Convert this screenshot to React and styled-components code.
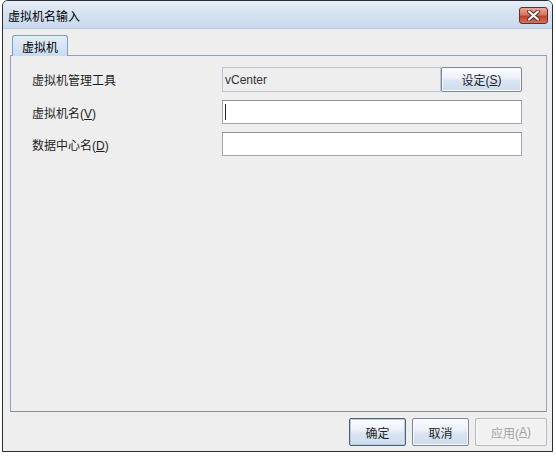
import React from 'react'
import styled, { createGlobalStyle } from 'styled-components'

const GlobalStyle = createGlobalStyle`
  body {
    margin: 0;
    background: #ffffff;
    font-family: "Liberation Sans", "Noto Sans CJK SC", sans-serif;
    font-size: 12px;
    color: #1e1e1e;
  }
`

const Window = styled.div`
  margin-left: 2px;
  width: 551px;
  height: 452px;
  box-sizing: border-box;
  border: 1px solid #2a2d33;
  border-radius: 6px 6px 0 0;
  box-shadow: 0 1px 0 #41b6d9;
  display: flex;
  flex-direction: column;
  overflow: hidden;
  background: #eeeeee;
`
const TitleBar = styled.div`
  height: 27px;
  flex: none;
  display: flex;
  align-items: center;
  justify-content: space-between;
  padding: 0 4px 0 5px;
  background: linear-gradient(#e6eef8, #d3e0f0 55%, #c9d9ee);
  border-bottom: 1px solid #b9c9de;
`
const Title = styled.span`
  font-size: 12px;
  color: #000;
  margin-top: 1px;
`
const CloseButton = styled.div`
  width: 29px;
  height: 17px;
  margin-top: 2px;
  box-sizing: border-box;
  border: 1px solid #6e2a22;
  border-radius: 3px;
  background: linear-gradient(#e9a999, #d77561 45%, #c0412a 55%, #d5735a);
  display: flex;
  align-items: center;
  justify-content: center;
`
const Body = styled.div`
  flex: 1;
  display: flex;
  flex-direction: column;
  padding: 6px 5px 5px 7px;
`
const TabStrip = styled.div`
  display: flex;
  padding-left: 2px;
  margin-bottom: -1px;
  position: relative;
  z-index: 1;
`
const Tab = styled.div`
  width: 56px;
  height: 21px;
  box-sizing: border-box;
  border: 1px solid #7f9ccb;
  border-bottom: none;
  border-radius: 3px 3px 0 0;
  background: linear-gradient(#e4edf9, #c9dbf1);
  display: flex;
  align-items: center;
  justify-content: center;
  color: #000;
`
const Panel = styled.div`
  height: 357px;
  box-sizing: border-box;
  border: 1px solid #8c9fc6;
  border-right-color: #9aa3b3;
  border-bottom-color: #8b8e96;
  padding: 11px 0 0 21px;
  display: grid;
  grid-template-columns: 190px 300px;
  grid-auto-rows: min-content;
  row-gap: 8px;
  align-items: center;
`
const Label = styled.div`
  color: #1e1e1e;
`
const Mn = styled.span`
  text-decoration: underline;
  text-underline-offset: 1px;
`
const FieldRow = styled.div`
  display: flex;
  height: 25px;
`
const Field = styled.div`
  height: ${(p) => (p.$tall ? 25 : 24)}px;
  flex: 1;
  box-sizing: border-box;
  border: 1px solid ${(p) => (p.$readonly ? '#b8c6d6' : '#9ea7b4')};
  border-top-color: ${(p) => (p.$readonly ? '#b8c6d6' : '#8a919c')};
  background: ${(p) => (p.$readonly ? '#eeeeee' : '#ffffff')};
  display: flex;
  align-items: center;
  padding-left: 2px;
  color: #333;
`
const Caret = styled.span`
  width: 1px;
  height: 16px;
  background: #222;
`
const Button = styled.div`
  width: ${(p) => p.$w || 57}px;
  height: ${(p) => p.$h || 28}px;
  box-sizing: border-box;
  border: 1px solid ${(p) => (p.$disabled ? '#b5b9bd' : p.$default ? '#4f5f76' : '#7d8797')};
  border-radius: 2px;
  background: ${(p) =>
    p.$disabled ? '#f1f1f1' : 'linear-gradient(#fbfcfe, #eaf0f8 45%, #d9e4f2 55%, #cfdcee)'};
  box-shadow: ${(p) => (p.$default ? 'inset 0 0 0 1px #b5cbe6' : 'inset 0 0 0 1px #f7f9fc')};
  color: ${(p) => (p.$disabled ? '#a3a3a3' : '#1e1e1e')};
  display: flex;
  align-items: center;
  justify-content: center;
`
const Footer = styled.div`
  display: flex;
  justify-content: flex-end;
  gap: 6px;
  padding: 6px 0 0;
`

function App() {
  return (
    <>
      <GlobalStyle />
      <Window>
        <TitleBar>
          <Title>虚拟机名输入</Title>
          <CloseButton>
            <svg width="13" height="11" viewBox="0 0 13 11">
              <path
                d="M2 1.5 L11 9.5 M11 1.5 L2 9.5"
                stroke="#5a2a22"
                strokeWidth="4"
                strokeLinecap="round"
              />
              <path
                d="M2 1.5 L11 9.5 M11 1.5 L2 9.5"
                stroke="#ffffff"
                strokeWidth="2.2"
                strokeLinecap="round"
              />
            </svg>
          </CloseButton>
        </TitleBar>
        <Body>
          <TabStrip>
            <Tab>虚拟机</Tab>
          </TabStrip>
          <Panel>
            <Label>虚拟机管理工具</Label>
            <FieldRow>
              <Field $readonly $tall>vCenter</Field>
              <Button $w={81} $h={25}>
                设定(<Mn>S</Mn>)
              </Button>
            </FieldRow>
            <Label>
              虚拟机名(<Mn>V</Mn>)
            </Label>
            <Field>
              <Caret />
            </Field>
            <Label>
              数据中心名(<Mn>D</Mn>)
            </Label>
            <Field />
          </Panel>
          <Footer>
            <Button $default>确定</Button>
            <Button>取消</Button>
            <Button $w={72} $disabled>
              应用(<Mn>A</Mn>)
            </Button>
          </Footer>
        </Body>
      </Window>
    </>
  )
}

export default App
